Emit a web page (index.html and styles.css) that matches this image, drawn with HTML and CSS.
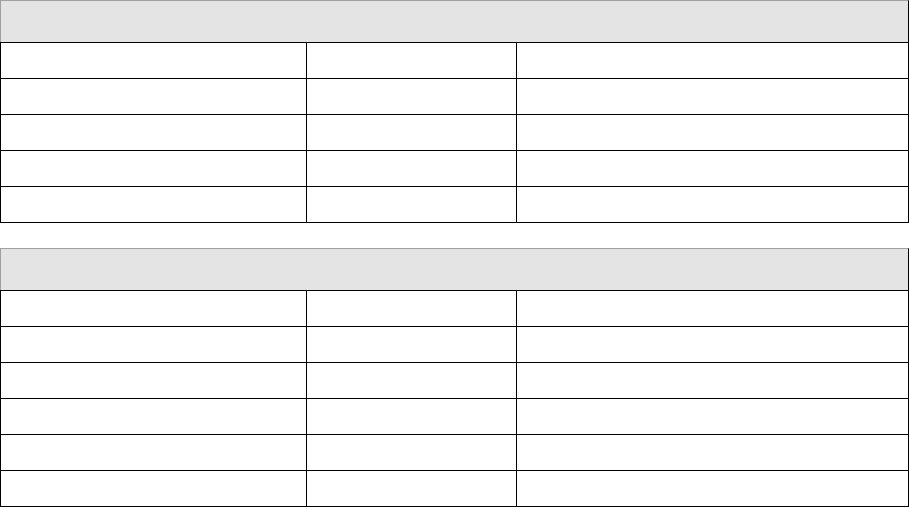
FILE: index.html
```html
<!DOCTYPE html>
<html>
<head>
<meta charset="utf-8">
<link rel="stylesheet" href="styles.css">
</head>
<body>
<div class="tbl">
  <div class="head"></div>
  <div class="row"><div class="c1"></div><div class="c2"></div><div class="c3"></div></div>
  <div class="row"><div class="c1"></div><div class="c2"></div><div class="c3"></div></div>
  <div class="row"><div class="c1"></div><div class="c2"></div><div class="c3"></div></div>
  <div class="row"><div class="c1"></div><div class="c2"></div><div class="c3"></div></div>
  <div class="row"><div class="c1"></div><div class="c2"></div><div class="c3"></div></div>
</div>
<div class="tbl second">
  <div class="head"></div>
  <div class="row"><div class="c1"></div><div class="c2"></div><div class="c3"></div></div>
  <div class="row"><div class="c1"></div><div class="c2"></div><div class="c3"></div></div>
  <div class="row"><div class="c1"></div><div class="c2"></div><div class="c3"></div></div>
  <div class="row"><div class="c1"></div><div class="c2"></div><div class="c3"></div></div>
  <div class="row"><div class="c1"></div><div class="c2"></div><div class="c3"></div></div>
  <div class="row"><div class="c1"></div><div class="c2"></div><div class="c3"></div></div>
</div>
</body>
</html>
```
FILE: styles.css
```css
html, body {
  margin: 0;
  padding: 0;
  background: #ffffff;
  font-family: "Liberation Sans", Arial, sans-serif;
}
.tbl {
  width: 909px;
  border-bottom: 1px solid #000;
}
.tbl.second {
  margin-top: 25px;
}
.head {
  height: 42px;
  box-sizing: border-box;
  background: #e4e4e4;
  border-top: 1px solid #a0a0a0;
  border-left: 1px solid #a0a0a0;
  border-right: 1px solid #000;
}
.row {
  display: flex;
  height: 36px;
  box-sizing: border-box;
  border-top: 1px solid #000;
  border-left: 1px solid #000;
  border-right: 1px solid #000;
}
.c1 {
  width: 306px;
  box-sizing: border-box;
  border-right: 1px solid #000;
}
.c2 {
  width: 210px;
  box-sizing: border-box;
  border-right: 1px solid #000;
}
.c3 {
  flex: 1;
}
```
